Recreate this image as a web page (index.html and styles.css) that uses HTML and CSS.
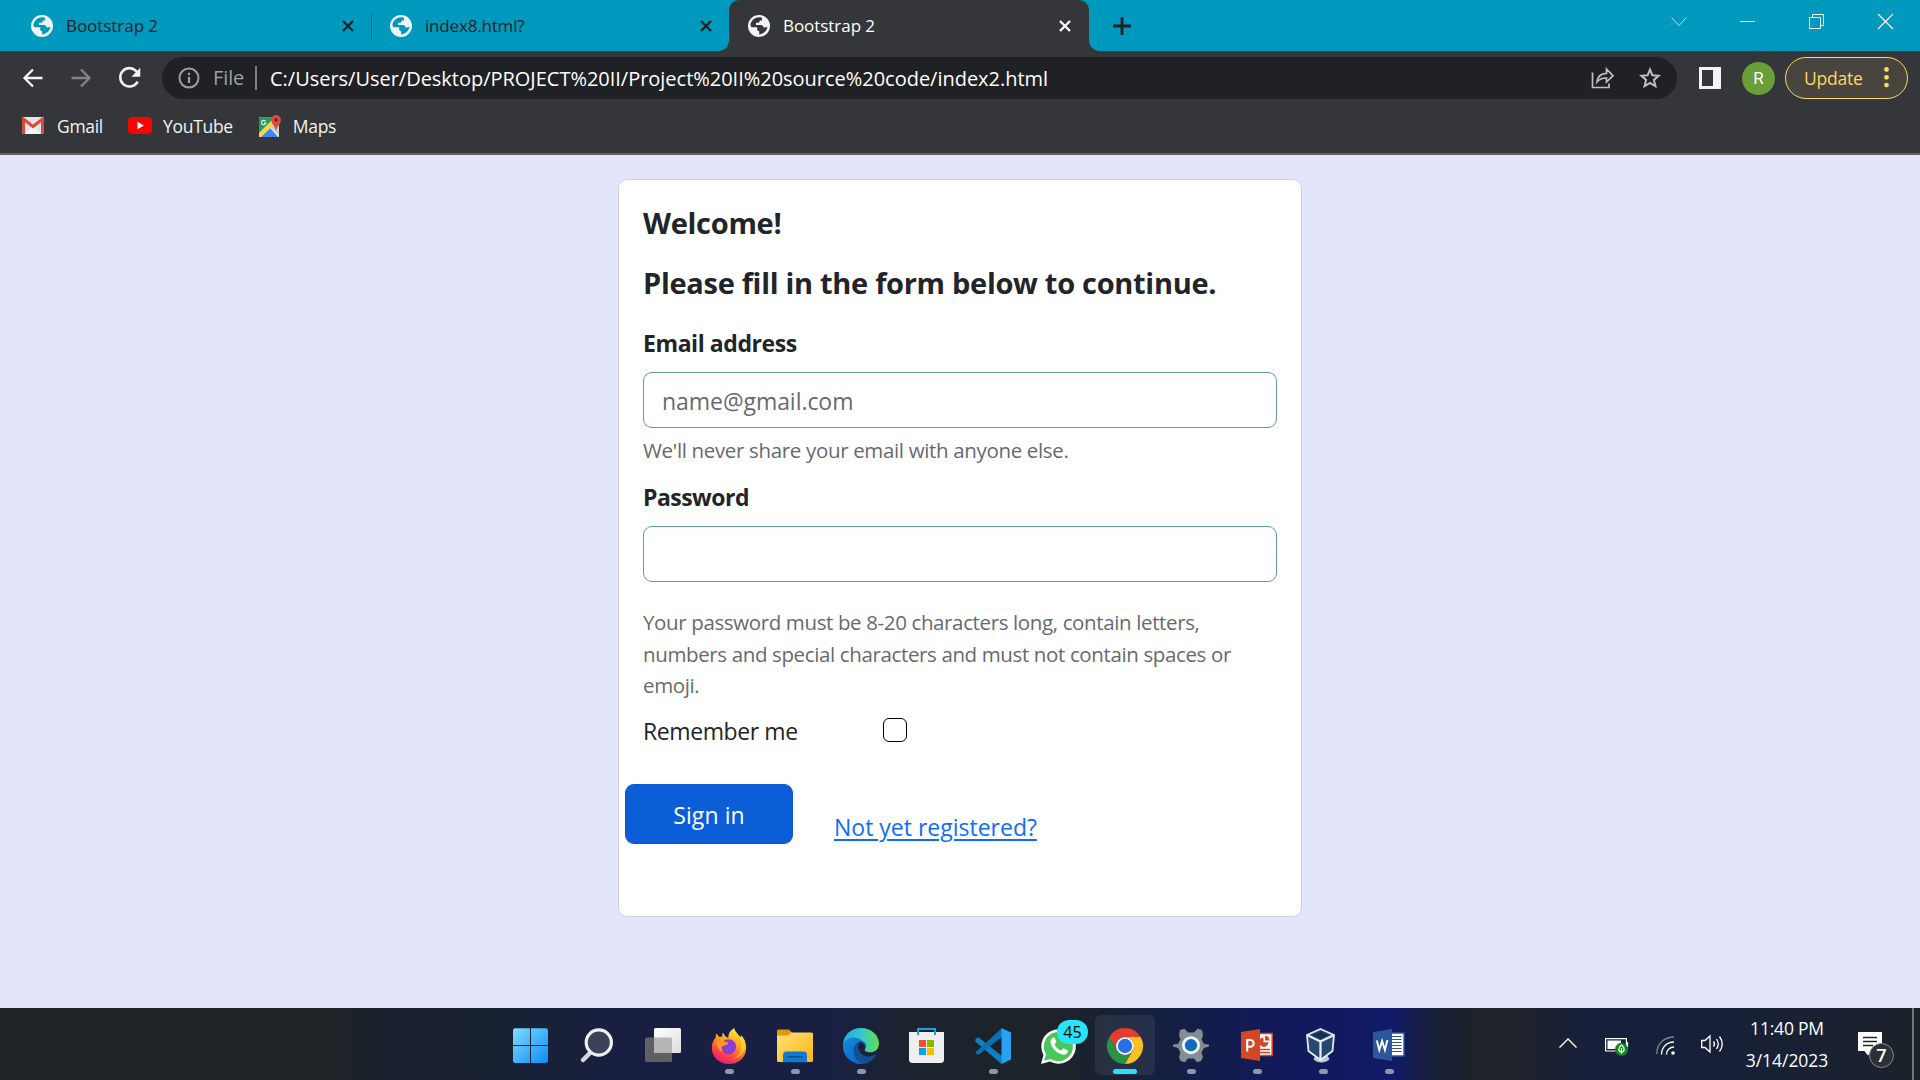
FILE: index.html
```
<!DOCTYPE html>
<html lang="en">
<head>
<meta charset="utf-8">
<title>Bootstrap 2</title>
<link rel="stylesheet" href="styles.css">
</head>
<body>
<svg class="defs" width="0" height="0">
  <symbol id="globe" viewBox="0 0 22 22">
    <circle cx="11" cy="11" r="11" fill="#f1f3f4"/>
    <path d="M12.2 2.2C8 2.2 4.600 4 3 7.600C2.200 9.500 2.400 11.300 3.500 12.200H9.200V14.400C9.200 15.600 10.100 16 11.200 16V19.500C15.500 19 19 15.800 19.500 11.800C18.500 12.400 16.700 12.700 15.700 12.200C14.800 10.500 14.300 9.900 12 9.900H8V7.700H10.300C11.500 7.700 11.700 6.300 11.700 5.500H14V3.500C14 2.800 13.200 2.200 12.200 2.200Z" class="land"/>
  </symbol>
  <symbol id="cross" viewBox="0 0 12 12"><path d="M1 1L11 11M11 1L1 11" stroke="currentColor" stroke-width="2.300"/></symbol>
</svg>

<header class="browser">
  <div class="tabs">
    <div class="tab tab-first"><svg class="favicon"><use href="#globe"/></svg><span>Bootstrap 2</span><svg class="close"><use href="#cross"/></svg></div>
    <div class="tab tab-second"><svg class="favicon"><use href="#globe"/></svg><span class="tight">index8.html?</span><svg class="close"><use href="#cross"/></svg></div>
    <div class="tab tab-active"><svg class="favicon"><use href="#globe"/></svg><span>Bootstrap 2</span><svg class="close"><use href="#cross"/></svg></div>
    <svg class="new-tab" viewBox="0 0 18 18"><path d="M9 0V18M0 9H18" stroke="#202124" stroke-width="2.800"/></svg>
    <div class="window-controls">
      <svg viewBox="0 0 15 15"><path d="M.5 3.500L8 11.500L15.500 3.500" fill="none" stroke="#b5e1ec" stroke-width="1"/></svg>
      <svg viewBox="0 0 15 15"><path d="M0 7.500H15" stroke="#fff"/></svg>
      <svg viewBox="0 0 15 15"><path d="M.5 3.500H11.500V14.500H.5ZM3.500 3.500V.5H14.500V11.500H11.500" fill="none" stroke="#fff"/></svg>
      <svg viewBox="0 0 15 15"><path d="M0 0L15 15M15 0L0 15" stroke="#fff" stroke-width="1.200"/></svg>
    </div>
  </div>

  <div class="toolbar">
    <svg class="nav" viewBox="0 0 20 20"><path d="M19.500 10H2M10 1.500L1.500 10L10 18.500" fill="none" stroke="#f1f3f4" stroke-width="2.300"/></svg>
    <svg class="nav" viewBox="0 0 20 20"><path d="M.5 10H18M10 1.500L18.500 10L10 18.500" fill="none" stroke="#818386" stroke-width="2.300"/></svg>
    <svg class="nav reload" viewBox="0 0 21 21"><path d="M17.800 14A8.800 8.800 0 1 1 17 4.500" fill="none" stroke="#f1f3f4" stroke-width="2.400"/><path d="M20.300 .8V9.200H11.900Z" fill="#f1f3f4"/></svg>
    <div class="omnibox">
      <svg class="info" viewBox="0 0 22 22"><circle cx="11" cy="11" r="9.500" fill="none" stroke="#9aa0a6" stroke-width="2"/><path d="M11 9.800V16M11 5.800V8" stroke="#9aa0a6" stroke-width="2.200"/></svg>
      <span class="scheme">File</span>
      <span class="url">C:/Users/User/Desktop/PROJECT%20II/Project%20II%20source%20code/index2.html</span>
      <svg class="share" viewBox="0 0 24 22"><path d="M1.500 5.500V20.500H18V16.500M6 15C6.500 9.500 10 6.500 15.500 6.300V2L22 8.700L15.500 15V11C11.500 10.800 8.500 12 6 15Z" fill="none" stroke="#bdc1c6" stroke-width="1.700"/></svg>
      <svg class="star" viewBox="0 0 22 22"><path d="M11 2.500L13.400 8.300L19.600 8.800L14.900 12.900L16.400 19.100L11 15.800L5.600 19.100L7.100 12.900L2.400 8.800L8.600 8.300Z" fill="none" stroke="#bdc1c6" stroke-width="2"/></svg>
    </div>
    <svg class="panel" viewBox="0 0 22 22"><path d="M0 0H22V22H0ZM3 3V19H14V3Z" fill="#f1f3f4" fill-rule="evenodd"/></svg>
    <div class="avatar">R</div>
    <div class="update"><span>Update</span><svg viewBox="0 0 5 21"><circle cx="2.500" cy="2.500" r="2.400"/><circle cx="2.500" cy="10.300" r="2.400"/><circle cx="2.500" cy="18.100" r="2.400"/></svg></div>
  </div>

  <nav class="bookmarks">
    <a><svg class="gmail" viewBox="0 0 22 17"><rect width="22" height="17" rx="1.500" fill="#e3e3e3"/><path d="M3 17L11 9L19 17Z" fill="#f5f5f5"/><path d="M1.500 17V2L11 9.500L20.500 2V17" fill="none" stroke="#d54b3d" stroke-width="3"/></svg>Gmail</a>
    <a class="to-youtube"><svg class="youtube" viewBox="0 0 24 17"><rect width="24" height="17" rx="4" fill="#f00"/><path d="M9.500 4.700V12.300L16 8.500Z" fill="#fff"/></svg>YouTube</a>
    <a class="to-maps"><svg class="maps" viewBox="0 0 22 22"><path d="M0 2.500H20V22H0Z" fill="#dfe3e8"/><path d="M0 2.500H16L0 19Z" fill="#1e9e58"/><path d="M2 22L11 13L19 22Z" fill="#4285f4"/><path d="M0 22V18L13 5L16 8.500L2 22Z" fill="#fdd643"/><path d="M12 12L20 20V12L16 8Z" fill="#c9cdd2"/><path d="M6.500 6.200A2.200 2.200 0 1 0 6.900 8H5" fill="none" stroke="#fff" stroke-width="1.100"/><path d="M17 16.500C16.500 11.500 12.300 9 12.300 4.800A4.800 4.800 0 0 1 21.900 4.800C21.900 9 17.600 11.500 17 16.500Z" fill="#dd4b3e"/><circle cx="17.100" cy="4.900" r="1.800" fill="#73261e"/></svg>Maps</a>
  </nav>
</header>

<main class="page">
  <form class="card">
    <h3>Welcome!</h3>
    <h3>Please fill in the form below to continue.</h3>
    <label class="label" for="email">Email address</label>
    <input class="field" id="email" type="text" placeholder="name@gmail.com">
    <p class="hint">We'll never share your email with anyone else.</p>
    <label class="label label-password" for="password">Password</label>
    <input class="field" id="password" type="password">
    <p class="rules">Your password must be 8-20 characters long, contain letters,<br>numbers and special characters and must not contain spaces or<br>emoji.</p>
    <div class="remember"><label for="remember">Remember me</label><input id="remember" type="checkbox"></div>
    <div class="actions"><button class="sign-in" type="button">Sign in</button><a class="register" href="#">Not yet registered?</a></div>
  </form>
</main>

<footer class="taskbar">
  <div class="apps">
    <div class="app"><svg viewBox="0 0 36 36"><defs><linearGradient id="win" x1="0" y1="0" x2="1" y2="1"><stop offset="0" stop-color="#7fdcff"/><stop offset="1" stop-color="#0a8df5"/></linearGradient></defs><path d="M1.500 .3H17V17H0V1.800ZM18 .3H33.500L35 1.800V17H18ZM0 18H17V35H1.500L0 33.500ZM18 18H35V33.500L33.500 35H18Z" fill="url(#win)"/></svg></div>
    <div class="app"><svg viewBox="0 0 36 36"><path d="M11 25L4 32" stroke="#d4d8da" stroke-width="4.500" stroke-linecap="round"/><circle cx="19.800" cy="14.500" r="12.600" fill="#3c4258" stroke="#eef0f1" stroke-width="3.200"/></svg></div>
    <div class="app"><svg viewBox="0 0 36 36"><defs><linearGradient id="tv" x1="0" y1="0" x2="1" y2="1"><stop offset="0" stop-color="#fff"/><stop offset="1" stop-color="#dedede"/></linearGradient></defs><rect x="0" y="9.500" width="27" height="24.500" rx="1.500" fill="#5f6062"/><rect x="9" y="0" width="27" height="25" rx="1.500" fill="url(#tv)"/><path d="M9 9.500H25.500A1.500 1.500 0 0 1 27 11V25H10.500A1.500 1.500 0 0 1 9 23.500Z" fill="#b5b6b8"/></svg></div>
    <div class="app"><svg viewBox="0 0 36 36"><defs><linearGradient id="ff" x1=".75" y1="0" x2=".3" y2="1"><stop offset="0" stop-color="#fff03f"/><stop offset=".4" stop-color="#ffa51f"/><stop offset=".7" stop-color="#ff4c3f"/><stop offset="1" stop-color="#e4197b"/></linearGradient><radialGradient id="fp"><stop offset="0" stop-color="#7048ef"/><stop offset="1" stop-color="#9b35c9"/></radialGradient></defs><path d="M18 36C8 36 .8 29 .8 20C.8 15.500 2.500 12 4.600 9.500L5 5.500L8.500 9L11.500 8.500C10.800 6.800 11.200 5.600 12.300 4.800C13 7.500 15 9.300 17.400 9.800C17.200 5 20 2 23.300 0C23.800 4 27 6.200 29.500 9.500L30 7C33.500 10.500 35.200 14.500 35.200 20C35.200 29 28 36 18 36Z" fill="url(#ff)"/><path d="M23 1C24 5 29 8 30 15C32 23 27 29 22 31C32 29 35 21 34 15C33 11 31 10 30 8L29.500 10Z" fill="#ffd337" opacity=".75"/><circle cx="17.700" cy="18.800" r="7.500" fill="url(#fp)"/><path d="M5 14C9 12 12.500 13.500 17.500 14.500C17 17 14 17.500 12 18C10 18.800 10 21 12 23.500C8 23 6 19 5 14Z" fill="#ff9a1e"/></svg><i></i></div>
    <div class="app"><svg viewBox="0 0 36 36"><defs><linearGradient id="fold" x1="0" y1="0" x2="1" y2="1"><stop offset="0" stop-color="#ffdf7a"/><stop offset="1" stop-color="#fcb711"/></linearGradient></defs><path d="M0 3A1.500 1.500 0 0 1 1.500 1.500H12L15 4.500V10H0Z" fill="#dc9a04"/><path d="M0 7.500H11L14.500 4.500H34.500A1.500 1.500 0 0 1 36 6V32.500A1.500 1.500 0 0 1 34.500 34H1.500A1.500 1.500 0 0 1 0 32.500Z" fill="url(#fold)"/><path d="M6 34.200V27A3.500 3.500 0 0 1 9.500 23.500H26.500A3.500 3.500 0 0 1 30 27V34.200Z" fill="#0f7bd0"/><path d="M10.500 28.800H25.500" stroke="#0b4a86" stroke-width="1.400"/></svg><i></i></div>
    <div class="app"><svg viewBox="0 0 36 36"><defs><linearGradient id="eg"><stop offset="0" stop-color="#22a9e0"/><stop offset=".5" stop-color="#34c6cf"/><stop offset="1" stop-color="#62e04a"/></linearGradient><linearGradient id="eb" x1="0" y1="0" x2=".5" y2="1"><stop offset="0" stop-color="#1488dc"/><stop offset="1" stop-color="#0a6bcb"/></linearGradient></defs><path d="M0 17.500C0 7 8 0 18 0C28.500 0 36 7.500 36 15.500C36 21 32 24.300 27 24.300C23 24.300 20.800 22.800 22 21C24 17.500 22 12.500 16 12Z" fill="url(#eg)"/><path d="M9.500 22C10 16 13.500 13.500 17 13.500C13.500 18 15.500 27.500 24 28.500C28 29 30.500 27 32.500 26.500C33.200 26.500 33 27.300 32.500 28C29.500 32.500 25 36 18.500 36C12 34 9 28 9.500 22Z" fill="#12508f"/><path d="M0 17.500C1.500 11.500 7 9.300 12 9.800C18 10.300 22 14.500 22.200 18.500C20.500 15 17.500 13 15.200 14.200C11.500 16.300 10.300 20 10.800 24C11.500 30 14.500 34.500 19.500 36C8 36.500 -.5 28 0 17.500Z" fill="url(#eb)"/></svg><i></i></div>
    <div class="app"><svg viewBox="0 0 36 36"><path d="M0 4H35V31.500A3.500 3.500 0 0 1 31.500 35H3.500A3.500 3.500 0 0 1 0 31.500Z" fill="#efefef"/><path d="M9 7V1H26V7" fill="none" stroke="#2299e2" stroke-width="2"/><path d="M10 12H17V19H10Z" fill="#f25022"/><path d="M18 12H25V19H18Z" fill="#7fba00"/><path d="M10 20H17V27H10Z" fill="#00a4ef"/><path d="M18 20H25V27H18Z" fill="#ffb900"/></svg></div>
    <div class="app"><svg viewBox="0 0 36 36"><path d="M.3 11.500L3 9L27 28L26.500 36L.3 13.500Z" fill="#1080c6"/><path d="M.3 24.500L27 0V9L3 27L.3 24.800Z" fill="#0870b5"/><path d="M26.500 0L36 4.500V31.500L26.500 36Z" fill="#25a2f0"/></svg><i></i></div>
    <div class="app"><svg viewBox="0 0 36 36"><path d="M0 36L2.500 27A17.300 17.300 0 1 1 9 33.500Z" fill="#fff"/><path d="M3 32.800L5 26.500A14.600 14.600 0 1 1 9.500 31Z" fill="#4bc65b"/><path d="M12.500 9.500C10 10 9 12.500 9.600 15C11 20.500 16.500 26 22.500 26.700C25 26.800 27 25 26.800 22.500L22.500 20.200L20 22.500C17 21.500 14.500 19 13.500 16.500L15.300 14L13.800 9.800Z" fill="#fff"/></svg><b class="badge">45</b></div>
    <div class="app app-current"><svg viewBox="0 0 36 36"><path d="M2.410 9A18 18 0 0 1 33.590 9H18A9 9 0 0 0 10.200 22.500Z" fill="#e63b2e"/><path d="M10.200 22.500L2.410 9A18 18 0 0 0 18 36L25.800 22.500A9 9 0 0 1 10.200 22.500Z" fill="#2a9244"/><path d="M18 9H33.590A18 18 0 0 1 18 36L25.800 22.500A9 9 0 0 0 18 9Z" fill="#fdc221"/><circle cx="18" cy="18" r="9" fill="#fff"/><circle cx="18" cy="18" r="7.200" fill="#2b6fe8"/></svg><i></i></div>
    <div class="app"><svg viewBox="0 0 36 36"><path d="M7 2L11.500 .8L15 4.500H21L24.500 .8L29 2L30 7.500L28.500 11.500L31 16L36 16.500V18.500L31 20L28.500 24.500L30 29L28 33L24 34.300L21 30.500H15L12 34.300L7.500 33L6 29L7.500 24.500L5 20L0 18.500V16.500L5 16L7.500 11.500L6 7.500Z" fill="#858d94"/><circle cx="18" cy="17.200" r="9" fill="#eef1f3"/><circle cx="18" cy="17.200" r="6.100" fill="#0d6cbd"/></svg><i></i></div>
    <div class="app"><svg viewBox="0 0 36 36"><path d="M19 5.500H33.200V27.500H19Z" fill="#fff" stroke="#d24726" stroke-width="1.600"/><path d="M24.500 9.500A4.700 4.700 0 1 0 29.500 14.200H24.500Z" fill="#d24726"/><path d="M26 7.800A5 5 0 0 1 30.700 12.500H26Z" fill="#d24726"/><path d="M21 21.500H31M21 24.500H31" stroke="#d24726" stroke-width="1.400"/><path d="M2 4L21 1V33L2 30Z" fill="#d24726"/><path d="M8.200 23.500V12H11.300A3.400 3.400 0 0 1 11.300 18.800H8.200" fill="none" stroke="#fff" stroke-width="2.100"/></svg><i></i></div>
    <div class="app"><svg viewBox="0 0 36 36"><path d="M11 27L8.500 31C11 35.500 22 35.500 24.500 31L22 27Z" fill="#c0c7d4"/><path d="M15.500 1L29 7L27.500 23L15.500 32L3.500 23L2 7Z" fill="#24486f" stroke="#e3ebf6" stroke-width="1.800"/><path d="M15.500 3.500L24 7.200L15.500 11L7 7.200Z" fill="#15304f"/><path d="M2 7L15.500 13.500L29 7M15.500 13.500V32" fill="none" stroke="#e3ebf6" stroke-width="2.300"/></svg><i></i></div>
    <div class="app"><svg viewBox="0 0 36 36"><path d="M19 5H33V28H19Z" fill="#fff" stroke="#2b579a" stroke-width="1.400"/><path d="M21 8.500H30.500M21 11.500H30.500M21 14.500H30.500M21 17.500H30.500M21 20.500H30.500M21 23.500H30.500" stroke="#2b579a" stroke-width="1.200"/><path d="M2 4L21 1V33L2 30Z" fill="#2b579a"/><path d="M5.800 12.500L8.300 22L11.100 13L13.900 22L16.400 12" fill="none" stroke="#fff" stroke-width="1.900"/></svg><i></i></div>
  </div>
  <div class="tray">
    <svg class="more" viewBox="0 0 18 10"><path d="M.5 9.500L9 1L17.500 9.500" fill="none" stroke="#fff" stroke-width="1.400"/></svg>
    <svg class="battery" viewBox="0 0 24 20"><path d="M.6 2.600H21.400V15H.6ZM22.500 6V11" fill="none" stroke="#fff" stroke-width="1.200"/><path d="M2.500 4.500H16V13H2.500Z" fill="#fff"/><circle cx="16.500" cy="13.300" r="6.500" fill="#10891c"/><path d="M16.500 9C13 12 13 15.500 16.500 16C20 15.500 20 12 16.500 9ZM16.500 12V18" fill="none" stroke="#fff" stroke-width="1.300"/></svg>
    <svg class="wifi" viewBox="0 0 20 19"><g fill="none" stroke="#fff" stroke-width="1.300"><path d="M.7 18C.7 8 8 1 18 1" opacity=".45"/><path d="M5.500 18.500C5.500 11 11 6 18 6"/><path d="M10.500 18.500C10.500 14 14 11 18 11"/></g><circle cx="17" cy="17" r="1.800" fill="#fff"/></svg>
    <svg class="sound" viewBox="0 0 23 18"><path d="M.7 5.500H4L9 1V17L4 12.500H.7Z" fill="none" stroke="#fff" stroke-width="1.300"/><path d="M12.500 6.500Q14.500 9 12.500 11.500M15.500 4Q19 9 15.500 14M18.500 1.500Q24 9 18.500 16.500" fill="none" stroke="#fff" stroke-width="1.300"/></svg>
    <div class="clock"><span>11:40 PM</span><span>3/14/2023</span></div>
    <div class="notifications"><svg viewBox="0 0 24 24"><path d="M0 0H24V19H14L10 23.500L6.500 19H0Z" fill="#fff"/><path d="M5 5.500H19M5 9.500H19M5 13.500H15" stroke="#20242c" stroke-width="1.300"/></svg><b>7</b></div>
    <div class="show-desktop"></div>
  </div>
</footer>
</body>
</html>
```
FILE: styles.css
```
* { box-sizing: border-box; }

body {
  margin: 0;
  width: 1920px;
  height: 1080px;
  overflow: hidden;
  display: flex;
  flex-direction: column;
  font-family: "Open Sans", "Noto Sans", sans-serif;
  color: #212529;
  background: #e4e5fa;
}

svg { display: block; flex: none; overflow: visible; }
.defs { position: absolute; }
h3, p { margin: 0; }

/* Browser chrome */
.browser {
  height: 155px;
  flex: none;
  background: #35363a;
  border-bottom: 2px solid #5f6065;
}

.tabs { display: flex; height: 51px; background: #0099be; }
.tab {
  position: relative;
  display: flex;
  align-items: center;
  gap: 13px;
  height: 51px;
  font-size: 17px;
  letter-spacing: -0.05px;
  color: #202124;
}
.tight { letter-spacing: -0.18px; }
.tab-first { width: 372px; padding: 0 18px 0 31px; }
.tab-first::after {
  content: "";
  position: absolute;
  right: 0;
  top: 12px;
  width: 1px;
  height: 29px;
  background: #14626f;
}
.tab-second { width: 357px; padding: 0 17px 0 18px; }
.tab-active {
  width: 360px;
  padding: 0 18px 0 19px;
  color: #fff;
  background: #35363a;
  border-radius: 10px 10px 0 0;
}
.tab-active::before, .tab-active::after {
  content: "";
  position: absolute;
  bottom: 0;
  width: 10px;
  height: 10px;
}
.tab-active::before { left: -10px; background: radial-gradient(circle at 0 0, #0099be 9.5px, #35363a 10px); }
.tab-active::after { right: -10px; background: radial-gradient(circle at 100% 0, #0099be 9.5px, #35363a 10px); }
.favicon { width: 22px; height: 22px; }
.tab-active .favicon { --land: #35363a; }
.land { fill: var(--land, #0099be); }
.close { width: 12px; height: 12px; margin-left: auto; }
.new-tab { width: 18px; height: 18px; margin: 17px 0 0 24px; }

.window-controls { display: flex; margin-left: auto; height: 43px; }
.window-controls svg { width: 15px; height: 15px; margin: 14px 27px; }

.toolbar {
  display: flex;
  align-items: center;
  height: 54px;
  padding: 0 12px 0 23px;
}
.nav { width: 20px; height: 20px; margin-right: 28px; }
.reload { width: 22px; height: 22px; margin-right: 21px; }
.omnibox {
  display: flex;
  align-items: center;
  width: 1515px;
  height: 42px;
  padding: 0 16px;
  border-radius: 21px;
  background: #202124;
  font-size: 20px;
  color: #fff;
}
.info { width: 22px; height: 22px; }
.scheme {
  margin-left: 13px;
  padding-right: 10px;
  width: 44px;
  border-right: 2px solid #7d8186;
  line-height: 24px;
  letter-spacing: -0.1px;
  color: #9aa0a6;
}
.url { margin-left: 13px; letter-spacing: -0.02px; white-space: nowrap; }
.share { width: 24px; height: 22px; margin-left: auto; }
.star { width: 22px; height: 22px; margin-left: 24px; }
.panel { width: 22px; height: 22px; margin-left: 22px; }
.avatar {
  width: 33px;
  height: 33px;
  margin-left: 21px;
  border-radius: 50%;
  background: #689f38;
  color: #fff;
  font: 17px/33px Roboto, sans-serif;
  text-align: center;
}
.update {
  display: flex;
  align-items: center;
  justify-content: space-between;
  width: 123px;
  height: 42px;
  margin-left: auto;
  padding: 0 18px 1px 18px;
  border: 1.500px solid #fdd663;
  border-radius: 21px;
  background: #48453f;
  font-size: 17.500px;
  letter-spacing: -0.25px;
  color: #fdd663;
}
.update svg { width: 5px; height: 21px; fill: #fdd663; }

.bookmarks {
  display: flex;
  align-items: center;
  height: 40px;
  padding: 1px 0 0 22px;
  font-size: 17.500px;
  letter-spacing: -0.3px;
  color: #f1f3f4;
}
.bookmarks a { display: flex; align-items: center; }
.gmail { width: 22px; height: 17px; margin-right: 13px; }
.to-youtube { margin-left: 25px; }
.youtube { width: 24px; height: 17px; margin-right: 11px; }
.to-maps { margin-left: 26px; }
.maps { width: 22px; height: 22px; margin-right: 12px; }

/* Sign-in page */
.page {
  flex: 1;
  padding-top: 24px;
  display: flex;
  justify-content: center;
  align-items: flex-start;
}
.card {
  width: 684px;
  height: 738px;
  padding: 24px;
  display: flex;
  flex-direction: column;
  background: #fff;
  border: 1px solid #d0d0d6;
  border-radius: 9px;
}
h3 {
  margin-bottom: 23px;
  font-size: 29px;
  font-weight: 700;
  line-height: 37px;
  letter-spacing: -0.3px;
}
.label {
  margin: 1px 0 11px;
  font-size: 23px;
  font-weight: 700;
  line-height: 36px;
  letter-spacing: -0.42px;
}
.label-password { margin-top: 13px; letter-spacing: -0.52px; }
.field {
  width: 100%;
  height: 56px;
  padding: 2px 18px 0;
  border: 1px solid #5f9ea0;
  border-radius: 9px;
  background: #fff;
  font: 23px "Open Sans", "Noto Sans", sans-serif;
  letter-spacing: -0.05px;
  color: #212529;
}
.field::placeholder { color: #666a6e; opacity: 1; }
.hint, .rules {
  font-size: 20.500px;
  letter-spacing: -0.34px;
  color: #666a6e;
  white-space: nowrap;
}
.hint { margin-top: 6px; line-height: 32px; }
.rules { margin-top: 25px; line-height: 31.500px; letter-spacing: -0.37px; }
.remember {
  display: flex;
  margin-top: 11px;
  font-size: 23px;
  line-height: 36px;
  letter-spacing: -0.4px;
}
.remember label { width: 240px; }
.remember input {
  appearance: none;
  width: 24px;
  height: 24px;
  margin: 5px 0 0;
  border: 1px solid #000;
  border-radius: 6px;
}
.actions { display: flex; align-items: flex-start; margin: 35px 0 0 -18px; font-size: 23px; }
.sign-in {
  width: 168px;
  height: 60px;
  padding: 2px 0 0;
  border: 1px solid #0a58ca;
  border-radius: 9px;
  background: #0b5ed7;
  color: #fff;
  font: 23px "Open Sans", "Noto Sans", sans-serif;
  letter-spacing: 0.1px;
}
.register {
  margin: 25px 0 0 41px;
  line-height: 36px;
  color: #0d6efd;
  text-decoration: underline;
  text-decoration-thickness: 2px;
  text-underline-offset: 3px;
}

/* Taskbar */
.taskbar {
  display: flex;
  height: 72px;
  flex: none;
  padding-left: 498px;
  color: #fff;
  background: linear-gradient(90deg, #1e2326 0, #1e2326 335px, #1b212d 380px, #182133 500px, #181f43 640px, #181f43 830px, #1b2330 900px, #1c2328 1050px, #15203f 1160px, #121a58 1270px, #111a68 1390px, #1a2034 1440px, #1f2225 1500px, #17203a 1590px, #17203a 1680px, #1a2131 1850px, #1c2228 1920px);
}
.apps { display: flex; gap: 6px; padding: 7px 3px 0; }
.app {
  position: relative;
  display: flex;
  flex-direction: column;
  align-items: center;
  gap: 5px;
  width: 60px;
  height: 60px;
  padding-top: 13px;
  border-radius: 6px;
}
.app svg { width: 36px; height: 36px; }
.app i { width: 9px; height: 5px; border-radius: 3px; background: #9195a8; }
.app-current { background: rgba(255, 255, 255, 0.07); }
.app-current i { width: 24px; background: #30dcfa; }
.badge {
  position: absolute;
  left: 28px;
  top: 5px;
  width: 31px;
  height: 24px;
  border-radius: 12px;
  background: #27e5ff;
  color: #000;
  font-size: 16px;
  font-weight: 400;
  line-height: 24px;
  text-align: center;
}

.tray { display: flex; flex: 1; align-items: flex-start; }
.more { width: 18px; height: 10px; margin: 30px 0 0 137px; }
.battery { width: 24px; height: 20px; margin: 28px 0 0 28px; }
.wifi { width: 20px; height: 19px; margin: 28px 0 0 27px; }
.sound { width: 23px; height: 18px; margin: 27px 0 0 25px; }
.clock {
  display: flex;
  flex-direction: column;
  align-items: center;
  width: 84px;
  margin: 4px 0 0 21px;
  font-size: 17.500px;
  line-height: 32px;
  letter-spacing: -0.05px;
}
.clock span:first-child { letter-spacing: -0.2px; }
.notifications { position: relative; margin: 24px 0 0 29px; }
.notifications svg { width: 24px; height: 24px; }
.notifications b {
  position: absolute;
  left: 11px;
  top: 11px;
  width: 25px;
  height: 25px;
  border: 1px solid #85878a;
  border-radius: 50%;
  background: #2e3033;
  font-size: 18px;
  font-weight: 600;
  line-height: 23px;
  text-align: center;
}
.show-desktop { width: 2px; height: 72px; margin: 0 6px 0 auto; background: #72767e; }
```
